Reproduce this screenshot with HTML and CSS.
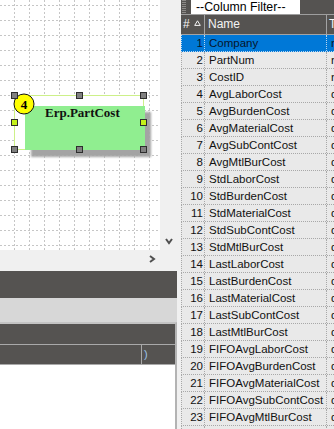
FILE: index.html
```html
<!DOCTYPE html>
<html>
<head>
<meta charset="utf-8">
<link rel="stylesheet" href="styles.css">
</head>
<body>
<div class="app">
  <div class="designer">
    <div class="canvas-row">
      <div class="canvas">
        <svg class="diagram" width="160" height="250" viewBox="0 0 160 250">
          <defs>
            <filter id="soft" x="-10%" y="-10%" width="120%" height="130%">
              <feGaussianBlur stdDeviation="1.2"/>
            </filter>
          </defs>
          <path class="grid-lines" d="M14.5 0V250M29.5 0V250M44.5 0V250M59.5 0V250M74.5 0V250M89.5 0V250M104.5 0V250M119.5 0V250M134.5 0V250M149.5 0V250M0 5.5H160M0 20.5H160M0 35.5H160M0 50.5H160M0 65.5H160M0 80.5H160M0 95.5H160M0 110.5H160M0 125.5H160M0 140.5H160M0 155.5H160M0 170.5H160M0 185.5H160M0 200.5H160M0 215.5H160M0 230.5H160M0 245.5H160"/>
          <!-- selection outline of the table node -->
          <rect class="sel-outline" x="14.5" y="95.5" width="129" height="54"/>
          <!-- table node -->
          <rect class="node-shadow" x="31" y="112" width="120" height="45" filter="url(#soft)"/>
          <rect class="node-body" x="25" y="106" width="120" height="44"/>
          <text class="node-title" x="45" y="117">Erp.PartCost</text>
          <circle class="node-badge" cx="24" cy="104" r="10"/>
          <text class="node-badge-num" x="24" y="109" text-anchor="middle">4</text>
          <!-- resize handles -->
          <rect class="handle" x="11.5" y="92.5" width="6" height="6"/>
          <rect class="handle" x="76.5" y="92.5" width="6" height="6"/>
          <rect class="handle" x="140.5" y="92.5" width="6" height="6"/>
          <rect class="handle side" x="11.5" y="119.5" width="6" height="6"/>
          <rect class="handle side" x="140.5" y="119.5" width="6" height="6"/>
          <rect class="handle" x="11.5" y="146.5" width="6" height="6"/>
          <rect class="handle" x="76.5" y="146.5" width="6" height="6"/>
          <rect class="handle" x="140.5" y="146.5" width="6" height="6"/>
        </svg>
      </div>
      <div class="vscroll">
        <svg class="chev" width="8" height="7" viewBox="0 0 8 7"><polyline points="1,1 4,5 7,1"/></svg>
      </div>
    </div>
    <div class="hscroll">
      <svg class="chev" width="7" height="8" viewBox="0 0 7 8"><polyline points="1,1 5,4 1,7"/></svg>
    </div>
    <div class="bar-dark"></div>
    <div class="bar-light"></div>
    <div class="sub-grid">
      <div class="sg-head"></div>
      <div class="sg-row">
        <div class="sg-cell wide"></div>
        <div class="sg-cell tail">)</div>
      </div>
      <div class="sg-body"></div>
    </div>
  </div>

  <div class="fields">
    <div class="toolbar">
      <span class="grip"></span>
      <div class="filter">--Column Filter--</div>
    </div>
    <div class="grid-head">
      <div class="hc num">#<svg class="sort" width="7" height="6" viewBox="0 0 7 6"><path d="M3.5 0.8L6.3 5.4H0.7Z"/></svg></div>
      <div class="hc name">Name</div>
      <div class="hc type">Type</div>
    </div>
    <div class="rows">
      <div class="row selected"><div class="c num">1</div><div class="c name">Company</div><div class="c type">nvarchar</div></div>
      <div class="row"><div class="c num">2</div><div class="c name">PartNum</div><div class="c type">nvarchar</div></div>
      <div class="row"><div class="c num">3</div><div class="c name">CostID</div><div class="c type">nvarchar</div></div>
      <div class="row"><div class="c num">4</div><div class="c name">AvgLaborCost</div><div class="c type">decimal</div></div>
      <div class="row"><div class="c num">5</div><div class="c name">AvgBurdenCost</div><div class="c type">decimal</div></div>
      <div class="row"><div class="c num">6</div><div class="c name">AvgMaterialCost</div><div class="c type">decimal</div></div>
      <div class="row"><div class="c num">7</div><div class="c name">AvgSubContCost</div><div class="c type">decimal</div></div>
      <div class="row"><div class="c num">8</div><div class="c name">AvgMtlBurCost</div><div class="c type">decimal</div></div>
      <div class="row"><div class="c num">9</div><div class="c name">StdLaborCost</div><div class="c type">decimal</div></div>
      <div class="row"><div class="c num">10</div><div class="c name">StdBurdenCost</div><div class="c type">decimal</div></div>
      <div class="row"><div class="c num">11</div><div class="c name">StdMaterialCost</div><div class="c type">decimal</div></div>
      <div class="row"><div class="c num">12</div><div class="c name">StdSubContCost</div><div class="c type">decimal</div></div>
      <div class="row"><div class="c num">13</div><div class="c name">StdMtlBurCost</div><div class="c type">decimal</div></div>
      <div class="row"><div class="c num">14</div><div class="c name">LastLaborCost</div><div class="c type">decimal</div></div>
      <div class="row"><div class="c num">15</div><div class="c name">LastBurdenCost</div><div class="c type">decimal</div></div>
      <div class="row"><div class="c num">16</div><div class="c name">LastMaterialCost</div><div class="c type">decimal</div></div>
      <div class="row"><div class="c num">17</div><div class="c name">LastSubContCost</div><div class="c type">decimal</div></div>
      <div class="row"><div class="c num">18</div><div class="c name">LastMtlBurCost</div><div class="c type">decimal</div></div>
      <div class="row"><div class="c num">19</div><div class="c name">FIFOAvgLaborCost</div><div class="c type">decimal</div></div>
      <div class="row"><div class="c num">20</div><div class="c name">FIFOAvgBurdenCost</div><div class="c type">decimal</div></div>
      <div class="row"><div class="c num">21</div><div class="c name">FIFOAvgMaterialCost</div><div class="c type">decimal</div></div>
      <div class="row"><div class="c num">22</div><div class="c name">FIFOAvgSubContCost</div><div class="c type">decimal</div></div>
      <div class="row"><div class="c num">23</div><div class="c name">FIFOAvgMtlBurCost</div><div class="c type">decimal</div></div>
      <div class="row"><div class="c num">24</div><div class="c name">FIFOLaborCost</div><div class="c type">decimal</div></div>
    </div>
  </div>
</div>
</body>
</html>
```

FILE: styles.css
```css
* { box-sizing: border-box; }

html, body {
  margin: 0;
  padding: 0;
}

body {
  width: 334px;
  height: 429px;
  overflow: hidden;
  background: #f0f0f0;
  font-family: "Liberation Sans", Arial, sans-serif;
}

.app {
  display: flex;
  width: 334px;
  height: 429px;
}

/* ---------- diagram side ---------- */
.designer {
  width: 177px;
  flex: none;
  display: flex;
  flex-direction: column;
}

.canvas-row {
  display: flex;
  height: 250px;
}

.canvas {
  width: 160px;
  height: 250px;
  background: #ffffff;
}

.diagram { display: block; }

.grid-lines {
  fill: none;
  stroke: #c6c6c6;
  stroke-width: 1;
  stroke-dasharray: 2 2;
}

.sel-outline {
  fill: #ffffff;
  stroke: #cdf089;
  stroke-width: 1;
}

.node-shadow { fill: #a4a4a4; }

.node-body { fill: #90ee90; }

.node-title {
  font-family: "Liberation Serif", "Times New Roman", serif;
  font-weight: bold;
  font-size: 13px;
  fill: #111111;
}

.node-badge {
  fill: #ffff00;
  stroke: #111111;
  stroke-width: 1;
}

.node-badge-num {
  font-family: "Liberation Serif", "Times New Roman", serif;
  font-weight: bold;
  font-size: 13px;
  fill: #000000;
}

.handle {
  fill: #808080;
  stroke: #2e2e2e;
  stroke-width: 1;
}

.handle.side { fill: #c4f21a; }

.vscroll {
  width: 17px;
  display: flex;
  flex-direction: column;
  justify-content: flex-end;
  padding: 0 0 5px 5px;
}

.chev { display: block; }

.chev polyline {
  fill: none;
  stroke: #4f4f4f;
  stroke-width: 2;
}

.hscroll {
  height: 21px;
  padding: 5px 0 0 149px;
}

.bar-dark {
  height: 27px;
  background: #555351;
}

.bar-light {
  height: 24px;
  background: #d7d7d7;
}

.sub-grid {
  flex: 1;
  display: flex;
  flex-direction: column;
  border-top: 2px solid #c3c3c3;
  border-right: 2px solid #b3b3b3;
}

.sg-head {
  height: 21px;
  background: #555351;
  border-bottom: 1px solid #a9a9a9;
}

.sg-row {
  display: flex;
  height: 20px;
  background: #555351;
  border-bottom: 1px solid #a9a9a9;
}

.sg-cell.wide {
  width: 142px;
  border-right: 1px solid #a9a9a9;
}

.sg-cell.tail {
  padding-left: 2px;
  color: #9cc4e8;
  font-size: 11px;
  line-height: 19px;
}

.sg-body {
  flex: 1;
  background: #ffffff;
}

/* ---------- column list side ---------- */
.fields {
  flex: 1;
  min-width: 0;
  margin-left: 4px;
  overflow: hidden;
  display: flex;
  flex-direction: column;
}

.toolbar {
  display: flex;
  flex: none;
  height: 15px;
  background: #555351;
  border-bottom: 1px solid #9e9e9e;
}

.grip {
  flex: none;
  width: 4px;
  height: 14px;
  margin-left: 1px;
  background: repeating-linear-gradient(to bottom, #8d8b89 0 1px, transparent 1px 2px);
}

.filter {
  flex: none;
  width: 109px;
  height: 14px;
  margin-left: 5px;
  padding-left: 5px;
  background: #ffffff;
  color: #000000;
  font-size: 12.3px;
  line-height: 14px;
  white-space: nowrap;
}

.grid-head {
  display: flex;
  flex: none;
  height: 20px;
  background: #555351;
  border-bottom: 1px solid #a3a3a3;
  color: #f4f4f4;
  font-size: 12px;
  line-height: 19px;
}

.hc {
  flex: none;
  white-space: nowrap;
  overflow: hidden;
}

.hc.num {
  width: 24px;
  padding-left: 2px;
  display: flex;
  gap: 4px;
  border-right: 1px solid #a3a3a3;
}

.sort {
  flex: none;
  margin-top: 5px;
  fill: none;
  stroke: #f4f4f4;
  stroke-width: 1;
}

.hc.name {
  width: 122px;
  padding-left: 3px;
  border-right: 1px solid #a3a3a3;
}

.hc.type {
  flex: 1;
  min-width: 0;
  padding-left: 2px;
}

.rows {
  display: flex;
  flex-direction: column;
}

.row {
  display: flex;
  flex: none;
  height: 17px;
  background: #e9e9e9;
  border-left: 1px dotted #a8a8a8;
  border-bottom: 1px dotted #a8a8a8;
  color: #111111;
  font-size: 11.5px;
  line-height: 16px;
  white-space: nowrap;
}

.row.selected {
  background: #0078d7;
  color: #06142a;
  border-left-color: #b8d6f0;
  border-bottom-color: #b8d6f0;
}

.c {
  flex: none;
  overflow: hidden;
}

.c.num {
  width: 23px;
  padding-right: 1px;
  text-align: right;
  border-right: 1px dotted #a8a8a8;
}

.c.name {
  width: 122px;
  padding-left: 4px;
  border-right: 1px dotted #a8a8a8;
}

.row.selected .c { border-right-color: #b8d6f0; }

.c.type {
  flex: 1;
  min-width: 0;
  padding-left: 4px;
}
```
